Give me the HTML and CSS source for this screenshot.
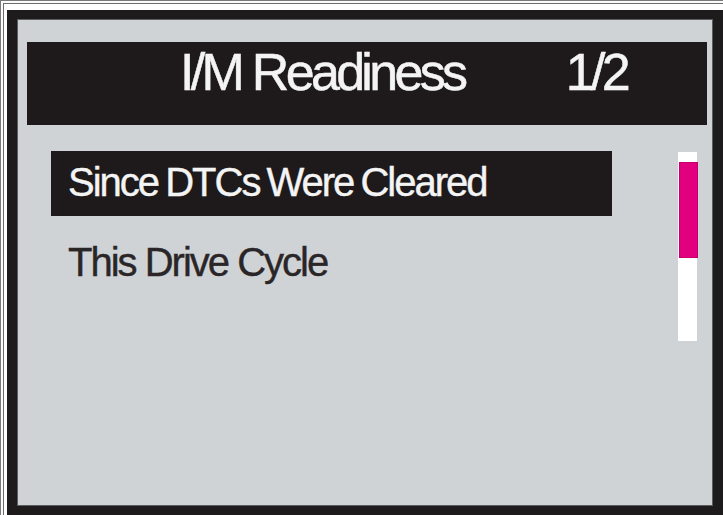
FILE: index.html
```html
<!DOCTYPE html>
<html>
<head>
<meta charset="utf-8">
<link rel="stylesheet" href="styles.css">
</head>
<body>
<div class="page">
  <div class="inner">
    <div class="frame">
      <div class="screen">
        <div class="header">
          <span class="title">I/M Readiness</span>
          <span class="count">1/2</span>
        </div>
        <div class="content">
          <ul class="list">
            <li class="row selected">Since DTCs Were Cleared</li>
            <li class="row">This Drive Cycle</li>
          </ul>
          <div class="scrollbar">
            <div class="thumb"></div>
          </div>
        </div>
      </div>
    </div>
  </div>
</div>
</body>
</html>
```
FILE: styles.css
```css
html, body {
  margin: 0;
  padding: 0;
  background: #ffffff;
}
body {
  font-family: "Liberation Sans", Arial, sans-serif;
  width: 723px;
  height: 515px;
  overflow: hidden;
}
.page {
  box-sizing: border-box;
  width: 723px;
  height: 515px;
  border-top: 1px solid #7a7a7a;
  border-left: 1px solid #7a7a7a;
  padding: 2px 0 0 2px;
  background: #fbfbfb;
}
.inner {
  box-sizing: border-box;
  height: 100%;
  border-top: 1px solid #6c6c6c;
  border-left: 1px solid #6c6c6c;
  padding: 6px 0 0 3px;
  background: #ffffff;
}
.frame {
  box-sizing: border-box;
  height: 100%;
  background: #1d1b1c;
  padding: 9px 10px 9px 10px;
}
.screen {
  box-sizing: border-box;
  height: 100%;
  background: #d0d3d5;
  border: 1px solid #5c5c5e;
  padding: 22px 5px 0 9px;
}
.header {
  display: flex;
  align-items: flex-start;
  height: 83px;
  background: #1e1a1b;
  color: #f4f4f4;
  font-size: 52px;
  line-height: 60px;
  letter-spacing: -3.7px;
  padding: 0 80px 0 153px;
  box-sizing: border-box;
  -webkit-text-stroke: 0.5px #f4f4f4;
}
.count {
  margin-left: auto;
}
.content {
  display: flex;
  align-items: flex-start;
  padding: 26px 10px 0 24px;
}
.list {
  list-style: none;
  margin: 0;
  padding: 0;
  width: 561px;
}
.row {
  box-sizing: border-box;
  height: 65px;
  line-height: 62px;
  font-size: 40px;
  letter-spacing: -2px;
  padding-left: 17px;
  color: #2a2628;
  margin-bottom: 15px;
  -webkit-text-stroke: 0.4px #2a2628;
}
.row.selected {
  background: #1e1a1b;
  color: #f4f4f4;
  word-spacing: -2px;
  -webkit-text-stroke: 0.4px #f4f4f4;
}
.scrollbar {
  margin-left: auto;
  margin-top: 1px;
  width: 19px;
  height: 189px;
  background: #ffffff;
  padding-top: 10px;
  box-sizing: border-box;
}
.thumb {
  width: 19px;
  height: 96px;
  background: #e2007f;
  margin-left: 1px;
  box-sizing: border-box;
  border: 1px solid #c40070;
}
```
